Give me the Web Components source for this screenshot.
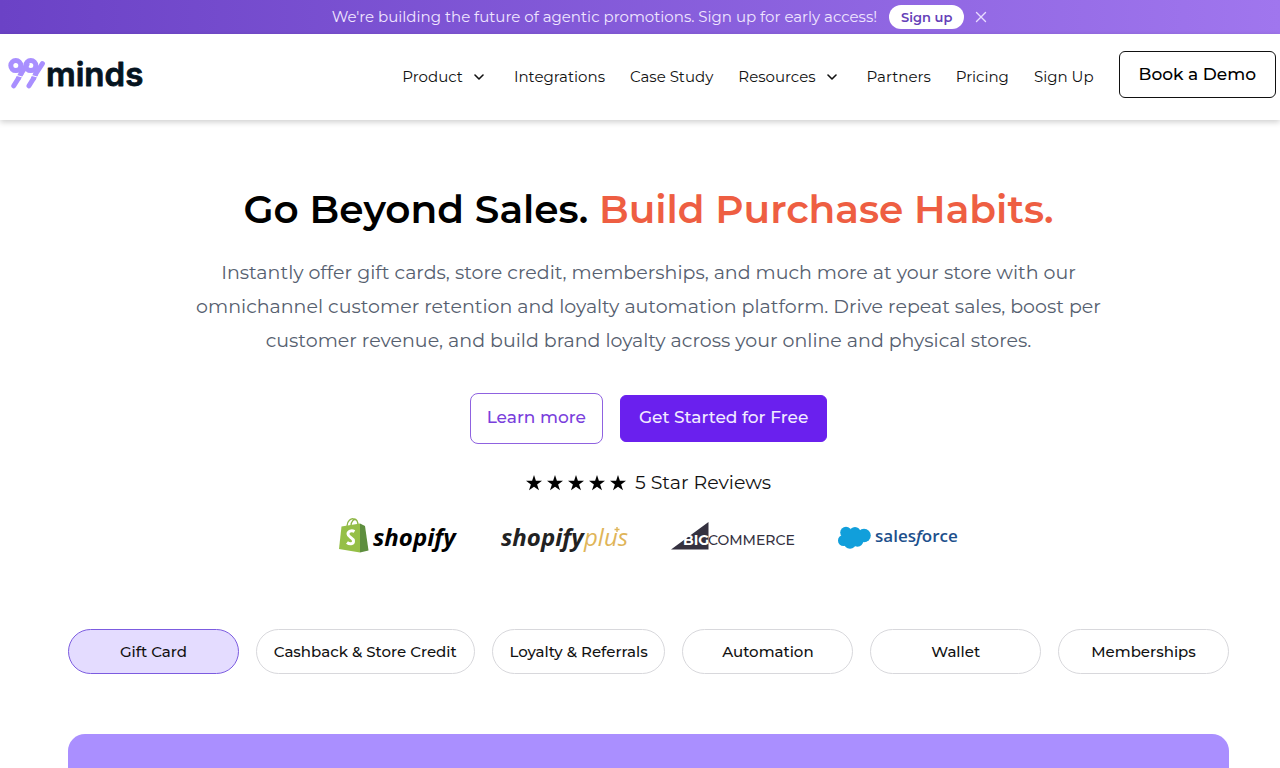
<!DOCTYPE html>
<html lang="en">
<head>
<meta charset="utf-8">
<meta name="viewport" content="width=device-width, initial-scale=1">
<title>99minds</title>
<style>
  body { margin: 0; background: #fff; color: #000; font-family: Montserrat, Inter, sans-serif; overflow-x: hidden; }
</style>
</head>
<body>
<site-page></site-page>

<script>
const define = (name, html) => {
  const template = document.createElement('template');
  template.innerHTML = html;
  customElements.define(name, class extends HTMLElement {
    constructor() {
      super();
      this.attachShadow({ mode: 'open' }).append(template.content.cloneNode(true));
    }
  });
};

define('promo-bar', `
<style>
  :host { display: flex; align-items: center; justify-content: center; gap: 12px; height: 34px; padding: 0 0 1px 39px;
    background: linear-gradient(90deg, #6b42c6, #a076ee); color: #f0e6ff; font-size: 15px; box-sizing: border-box; }
  a { background: #fff; color: #6540b8; border-radius: 12px; padding: 0 12px; font-size: 13px; font-weight: 600; line-height: 24px; text-decoration: none; }
  button { border: 0; background: none; padding: 0; width: 12px; height: 12px; display: block; }
  svg { display: block; }
  .actions { display: flex; align-items: center; gap: 11px; }
</style>
<span><slot></slot></span>
<div class="actions">
  <a href="#signup">Sign up</a>
  <button aria-label="Close"><svg width="12" height="12" viewBox="0 0 12 12"><path d="M1.5 1.5l9 9M10.5 1.5l-9 9" stroke="#e9dcff" stroke-width="1.4" stroke-linecap="round"/></svg></button>
</div>`);

define('brand-logo', `
<style>:host { display: block; } svg { display: block; } a { display: block; }</style>
<a href="#home" aria-label="99minds home">
<svg width="144" height="40" viewBox="6 54 144 40">
  <g fill="none" stroke="#a98fff" stroke-width="5" stroke-linecap="round">
    <circle cx="15.8" cy="65.6" r="5"/><circle cx="30.8" cy="65.6" r="5"/>
    <path d="M27 64.500L21.500 73M42.400 63.600L36 73.500"/>
    <path d="M18 79L13.800 85.800M33.200 79L29 85.800"/>
    <path d="M21.500 73L18 79M36 73.500L33.200 79" stroke-linecap="butt"/>
  </g>
  <path d="M15 75L24 77.500M30 75L39 77.500" stroke="#fff" stroke-width="1"/>
  <text x="46" y="86" font-family="Inter, sans-serif" font-weight="600" font-size="33" fill="#06141f" stroke="#06141f" stroke-width=".8" stroke-linejoin="round">minds</text>
</svg></a>`);

define('nav-item', `
<style>
  :host { display: block; }
  a { display: flex; align-items: center; gap: 12px; color: #111; text-decoration: none; font-size: 15px; line-height: 24px; white-space: nowrap; }
  svg { display: none; }
  :host([menu]) svg { display: block; }
  :host([menu]) a { padding-right: 5px; gap: 11px; }
</style>
<a href="#"><slot></slot><svg width="10" height="8" viewBox="0 0 10 8"><path d="M1 2l4 4 4-4" fill="none" stroke="#111" stroke-width="1.6" stroke-linecap="round" stroke-linejoin="round"/></svg></a>`);

define('site-header', `
<style>
  :host { display: flex; align-items: center; justify-content: space-between; height: 86px; padding: 0 4px 0 6px; box-sizing: border-box;
    background: #fff; box-shadow: 0 2px 6px rgba(0,0,0,.2); }
  brand-logo { padding-bottom: 6px; }
  nav { display: flex; align-items: center; gap: 25px; }
  button { font: 500 17px/24px Montserrat, Inter, sans-serif; color: #000; background: #fff; border: 1px solid #111; border-radius: 6px;
    padding: 10px 19px 11px; margin-bottom: 5px; white-space: nowrap; }
</style>
<brand-logo></brand-logo>
<nav>
  <nav-item menu>Product</nav-item>
  <nav-item>Integrations</nav-item>
  <nav-item>Case Study</nav-item>
  <nav-item menu>Resources</nav-item>
  <nav-item>Partners</nav-item>
  <nav-item>Pricing</nav-item>
  <nav-item>Sign Up</nav-item>
  <button>Book a Demo</button>
</nav>`);

define('action-button', `
<style>
  :host { display: block; }
  button { display: block; font: 500 17px/24px Montserrat, Inter, sans-serif; color: #f1eaff; background: #6a20ee; border: 1px solid #6a20ee;
    border-radius: 6px; padding: 9px 18px 12px; white-space: nowrap; }
  :host([outline]) button { color: #7a3fdc; background: #fff; border-color: #8f62e0; border-radius: 8px; padding: 11px 16px 14px; }
</style>
<button><slot></slot></button>`);

define('star-icon', `
<style>:host, svg { display: block; }</style>
<svg width="16" height="16" viewBox="0 0 16 16"><path d="M8 0l1.9 5.8H16l-4.9 3.6 1.9 5.9L8 11.7l-5 3.6 1.9-5.9L0 5.8h6.1z" fill="#000"/></svg>`);

define('review-line', `
<style>
  :host { display: flex; align-items: center; justify-content: center; gap: 9px; font-size: 19px; line-height: 24px; color: #111; }
  .stars { display: flex; gap: 5px; }
</style>
<div class="stars"><star-icon></star-icon><star-icon></star-icon><star-icon></star-icon><star-icon></star-icon><star-icon></star-icon></div>
<span><slot></slot></span>`);

define('partner-logos', `
<style>
  :host { display: flex; justify-content: center; gap: 41px; }
  svg { display: block; flex: none; }
</style>
<svg width="122" height="40" viewBox="337 515 122 40" role="img" aria-label="Shopify">
  <path d="M347 526c0-5 4-8 7-7 3 0 4 3 4 7M351 526c0-5 3-7 5-6" fill="none" stroke="#8db543" stroke-width="1.3"/>
  <path d="M341.500 526.500L360 523.500V552.500L339 549z" fill="#95bf47"/>
  <path d="M360 523.500l5 2.500 3.500 24.500-8.500 2z" fill="#5e8e3e"/>
  <path d="M354.500 531.500c-3-1.500-6.500-.5-6.500 2.500 0 3.500 5.500 3.500 5.500 7 0 3.500-4 3.500-6.500 1.500" fill="none" stroke="#fff" stroke-width="3"/>
  <text x="373" y="546" font-family="Open Sans, sans-serif" font-weight="700" font-style="italic" font-size="24" fill="#000">shopify</text>
</svg>
<svg width="130" height="40" viewBox="500 515 130 40" role="img" aria-label="Shopify Plus">
  <text x="501" y="546" font-family="Open Sans, sans-serif" font-weight="700" font-style="italic" font-size="24" fill="#222">shopify</text>
  <text x="584" y="546" font-family="Open Sans, sans-serif" font-weight="400" font-style="italic" font-size="24" fill="#dfb559">plus</text>
  <path d="M617 527v5M614.500 529.500h5" stroke="#dfb559" stroke-width="1.400"/>
</svg>
<svg width="126" height="40" viewBox="671 515 126 40" role="img" aria-label="BigCommerce">
  <path d="M671 549.500L708.500 522v27.500z" fill="#34313f"/>
  <text x="683" y="545" font-family="Montserrat, Inter, sans-serif" font-weight="700" font-size="14" fill="#fff">BIG</text>
  <text x="708" y="545" font-family="Montserrat, Inter, sans-serif" font-weight="500" font-size="14" fill="#34313f">COMMERCE</text>
</svg>
<svg width="122" height="40" viewBox="838 515 122 40" role="img" aria-label="Salesforce">
  <g fill="#119fdb"><circle cx="846" cy="532.500" r="5.800"/><circle cx="855" cy="532.500" r="5.500"/><circle cx="864" cy="535.500" r="6.800"/><circle cx="843.500" cy="540.500" r="5.500"/><circle cx="850" cy="542.500" r="6.200"/><circle cx="857.500" cy="541" r="5.800"/><path d="M845 533h18v8h-18z"/></g>
  <text x="875" y="542" font-family="Open Sans, sans-serif" font-weight="600" font-size="17" fill="#1c4f8c">sales<tspan font-style="italic">f</tspan>orce</text>
</svg>`);

define('hero-section', `
<style>
  :host { display: block; text-align: center; padding-top: 61px; }
  h1 { margin: 0; font-size: 39px; line-height: 56px; font-weight: 600; }
  h1 span { color: #ee5e42; }
  p { margin: 19px auto 35px; max-width: 940px; font-size: 19px; line-height: 34px; color: #56606f; }
  .actions { display: flex; justify-content: center; align-items: center; gap: 17px; margin-bottom: 27px; }
  review-line { margin-bottom: 20px; }
</style>
<h1>Go Beyond Sales. <span>Build Purchase Habits.</span></h1>
<p>Instantly offer gift cards, store credit, memberships, and much more at your store with our omnichannel customer retention and loyalty automation platform. Drive repeat sales, boost per customer revenue, and build brand loyalty across your online and physical stores.</p>
<div class="actions">
  <action-button outline>Learn more</action-button>
  <action-button>Get Started for Free</action-button>
</div>
<review-line>5 Star Reviews</review-line>
<partner-logos></partner-logos>`);

define('product-tab', `
<style>
  :host { display: block; }
  button { width: 100%; height: 45px; font: 500 15px/20px Montserrat, Inter, sans-serif; color: #111; background: #fff;
    border: 1px solid #d8d8dc; border-radius: 23px; padding: 0; white-space: nowrap; display: block; }
  :host([active]) button { background: #e4dcff; border-color: #7c5ce0; }
</style>
<button><slot></slot></button>`);

define('product-tabs', `
<style>
  :host { display: grid; grid-template-columns: 171fr 219fr 174fr 171fr 171fr 171fr; gap: 17px; }
</style>
<product-tab active>Gift Card</product-tab>
<product-tab>Cashback &amp; Store Credit</product-tab>
<product-tab>Loyalty &amp; Referrals</product-tab>
<product-tab>Automation</product-tab>
<product-tab>Wallet</product-tab>
<product-tab>Memberships</product-tab>`);

define('site-page', `
<style>
  :host { display: flex; flex-direction: column; height: 100vh; overflow: hidden; }
  promo-bar, site-header { flex: none; }
  main { flex: 1; display: flex; flex-direction: column; padding: 0 51px 0 68px; }
  product-tabs { margin: 74px 0 60px; }
  .panel { flex: 1; background: #aa8fff; border-radius: 17px 17px 0 0; }
</style>
<promo-bar>We're building the future of agentic promotions. Sign up for early access!</promo-bar>
<site-header></site-header>
<main>
  <hero-section></hero-section>
  <product-tabs></product-tabs>
  <div class="panel"></div>
</main>`);
</script>
</body>
</html>
